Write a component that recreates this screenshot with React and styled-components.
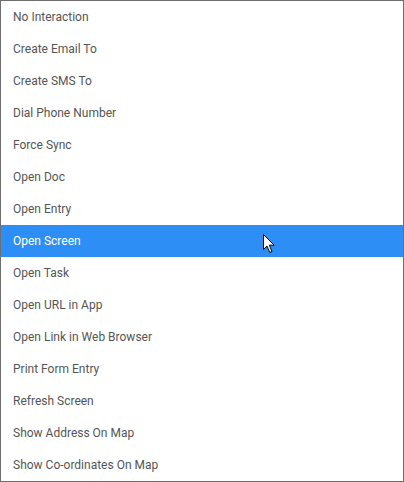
import React from 'react';
import styled, { createGlobalStyle } from 'styled-components';

const items = [
  'No Interaction',
  'Create Email To',
  'Create SMS To',
  'Dial Phone Number',
  'Force Sync',
  'Open Doc',
  'Open Entry',
  'Open Screen',
  'Open Task',
  'Open URL in App',
  'Open Link in Web Browser',
  'Print Form Entry',
  'Refresh Screen',
  'Show Address On Map',
  'Show Co-ordinates On Map',
];

const GlobalStyle = createGlobalStyle`
  html, body {
    margin: 0;
    padding: 0;
    background: #ffffff;
  }
`;

const Menu = styled.ul`
  list-style: none;
  margin: 0;
  padding: 0;
  width: 404px;
  height: 482px;
  box-sizing: border-box;
  border: 1px solid #6e6e6e;
  background: #ffffff;
  font-family: Roboto, "Liberation Sans", sans-serif;
`;

const Item = styled.li`
  position: relative;
  display: flex;
  align-items: center;
  height: 32px;
  padding-left: 12px;
  font-size: 12px;
  color: ${(p) => (p.$active ? '#ffffff' : '#555555')};
  background: ${(p) => (p.$active ? '#2d8ff5' : 'transparent')};
`;

const Cursor = styled.svg`
  position: absolute;
  left: 262px;
  top: 9px;
`;

const App = () => (
  <>
    <GlobalStyle />
    <Menu>
      {items.map((label) => {
        const active = label === 'Open Screen';
        return (
          <Item key={label} $active={active}>
            {label}
            {active && (
              <Cursor width="13" height="20" viewBox="0 0 13 20">
                <path
                  d="M0.5 0.5 L0.5 15.5 L4 12 L6.8 18.5 L9 17.5 L6.3 11.2 L11.2 11.2 Z"
                  fill="#ffffff"
                  stroke="#000000"
                  strokeWidth="1"
                  strokeLinejoin="round"
                />
              </Cursor>
            )}
          </Item>
        );
      })}
    </Menu>
  </>
);

export default App;
